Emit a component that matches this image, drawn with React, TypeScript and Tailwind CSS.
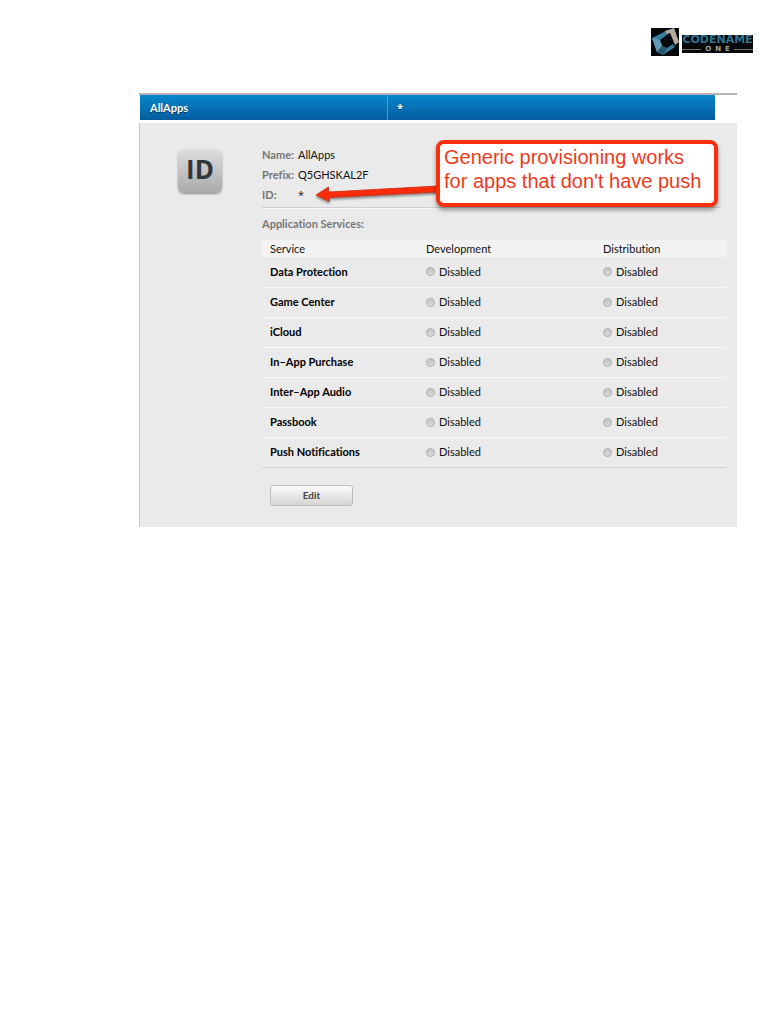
const services = [
  'Data Protection',
  'Game Center',
  'iCloud',
  'In–App Purchase',
  'Inter–App Audio',
  'Passbook',
  'Push Notifications',
];

function Logo() {
  return (
    <a href="#" aria-label="Codename One" className="flex items-center gap-[3px]">
      <svg viewBox="0 0 28 28" className="size-7" aria-hidden="true">
        <rect width="28" height="28" fill="#05090c" />
        <path d="M1 10 L15 3 L17 6 L9 12 L11 18 L16 20 L22 16 L24 19 L12 27 L6 24 Z" fill="#3a7c9d" />
        <path d="M1 10 L9 12 L11 18 L6 24 Z" fill="#5f9bb5" />
        <path d="M6 24 L11 18 L16 20 L12 27 Z" fill="#24566f" />
        <path d="M14 3 L23 0 L28 14 L24 17 L22 12 L19 5 L16 6 Z" fill="#b3ab9b" />
      </svg>
      <span className="mt-1 flex w-[71px] flex-col items-center bg-[#05090c] font-['DejaVu_Sans',sans-serif] text-[11px] leading-[10px] font-bold text-[#35718d]">
        <span>CODENAME</span>
        <span className="flex w-full items-center gap-1 text-[7px] leading-[8px] text-[#a8a294]">
          <span className="h-px flex-1 bg-[#77736a]" />
          <span className="flex gap-1">
            <span>O</span>
            <span>N</span>
            <span>E</span>
          </span>
          <span className="h-px flex-1 bg-[#77736a]" />
        </span>
      </span>
    </a>
  );
}

function Status() {
  return (
    <span className="flex items-center gap-1">
      <span className="size-[9px] rounded-full border border-[#b0b0b0] bg-linear-to-b from-[#c2c2c2] to-[#dadada]" />
      Disabled
    </span>
  );
}

function Callout() {
  return (
    <div className="absolute top-[45px] right-[19px] z-10">
      <svg
        viewBox="0 0 126 20"
        className="absolute top-[45px] right-[278px] h-5 w-[126px] overflow-visible drop-shadow-[0_2px_1px_rgba(0,0,0,0.4)]"
        aria-hidden="true"
      >
        <path d="M2 10 L14.5 2 L14.5 7 L124 1 Q128 4 124 7 L15 12.5 L15.5 16.5 Z" fill="#fb2c0b" stroke="#c92b12" strokeWidth="0.8" strokeLinejoin="round" />
      </svg>
      <p className="relative h-[67px] w-[282px] rounded-lg border-4 border-[#f92f0d] bg-white px-1 pt-px font-['Liberation_Sans',sans-serif] text-[20px] leading-6 whitespace-nowrap text-[#ee3a1c] shadow-[0_3px_4px_rgba(0,0,0,0.4)]">
        Generic provisioning works
        <br />
        for apps that don't have push
      </p>
    </div>
  );
}

export default function App() {
  return (
    <div className="min-h-screen bg-white pb-10 font-['Lato','Open_Sans',sans-serif] text-[11px] leading-5 text-[#111] [font-variant-ligatures:none]">
      <header className="flex justify-end pt-7 pr-7">
        <Logo />
      </header>

      <main className="relative mt-[37px] mr-11 ml-[139px] border-t-2 border-[#b4b4b4]">
        <div className="mr-[22px] ml-px flex h-[25px] items-center bg-linear-to-b from-[#0788cb] to-[#055c9f] font-bold text-white [text-shadow:0_1px_1px_rgba(0,0,0,0.5)]">
          <h1 className="flex h-full w-[248px] items-center border-r border-[#4a9dcc] pl-[10px]">AllApps</h1>
          <span className="pl-[9px] font-['Open_Sans',sans-serif]">*</span>
        </div>

        <div className="mt-[3px] flex border-l border-[#c6c6c6] bg-[#eaeaea] pt-[22px] pr-[11px] pb-[21px]">
          <div className="w-[122px] shrink-0 pt-1 pl-[38px]">
            <div className="flex size-11 items-center justify-center rounded-md bg-linear-to-b from-[#dedede] to-[#a9a9a9] pb-1 font-['Open_Sans',sans-serif] text-[26px] leading-10 font-bold text-[#33363a] shadow-[0_1px_2px_rgba(0,0,0,0.4)]">
              ID
            </div>
          </div>

          <div className="min-w-0 flex-1">
            <dl className="mr-[5px] grid grid-cols-[36px_1fr] border-b border-[#cfcfcf] pb-[2px] shadow-[0_1px_0_#f6f6f6]">
              <dt className="font-bold text-[#747474]">Name:</dt>
              <dd>AllApps</dd>
              <dt className="font-bold text-[#747474]">Prefix:</dt>
              <dd>Q5GHSKAL2F</dd>
              <dt className="font-bold text-[#747474]">ID:</dt>
              <dd className="font-['Open_Sans',sans-serif]">*</dd>
            </dl>
            <h2 className="mt-[6px] font-bold text-[#777]">Application Services:</h2>

            <table className="mt-[6px] w-full table-fixed border-collapse text-left">
              <thead>
                <tr className="h-[17px] bg-[#f2f2f2] leading-[17px]">
                  <th className="w-[156px] pl-2 font-normal">Service</th>
                  <th className="w-[177px] pl-2 font-normal">Development</th>
                  <th className="pl-2 font-normal">Distribution</th>
                </tr>
              </thead>
              <tbody>
                {services.map((name) => (
                  <tr key={name} className="h-[30px] border-b border-[#f8f8f8] last:border-[#d4d4d4]">
                    <th scope="row" className="pl-2 font-bold text-black">{name}</th>
                    <td className="pl-2"><Status /></td>
                    <td className="pl-2"><Status /></td>
                  </tr>
                ))}
              </tbody>
            </table>

            <button
              type="button"
              className="mt-[17px] ml-2 block h-[21px] w-[83px] rounded-[3px] border border-[#bdbdbd] bg-linear-to-b from-[#fbfbfb] to-[#d4d4d4] text-[10px] leading-none font-bold text-[#444]"
            >
              Edit
            </button>
          </div>
        </div>
        <Callout />
      </main>
    </div>
  );
}
